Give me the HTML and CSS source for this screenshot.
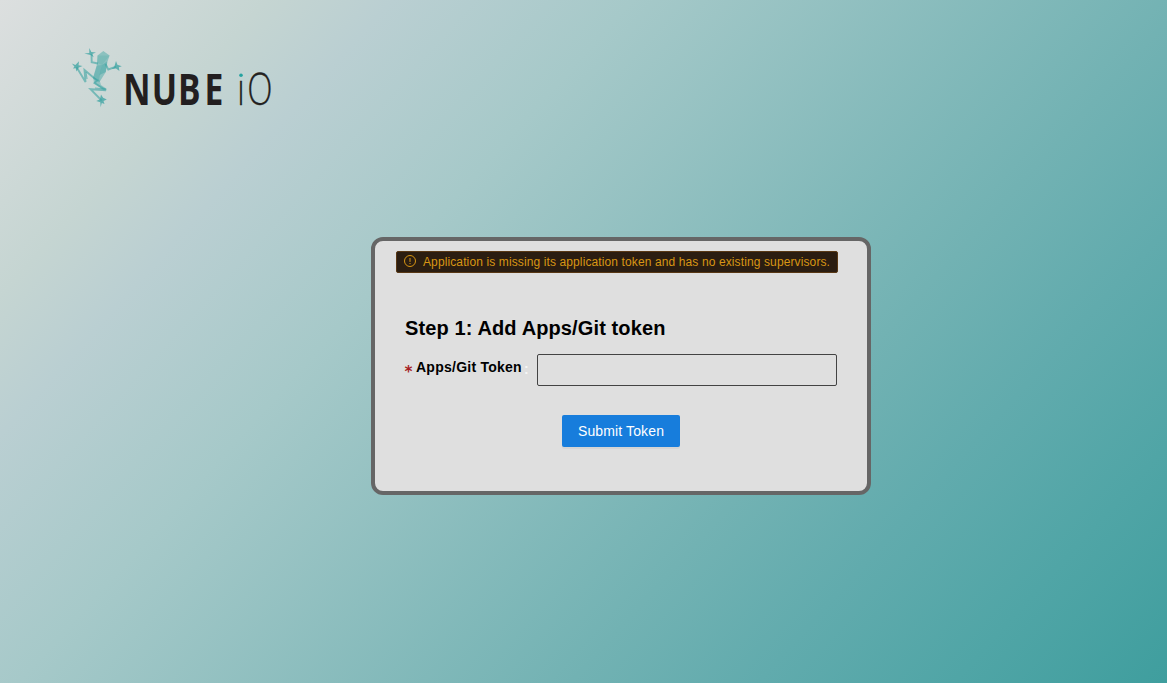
FILE: index.html
```html
<!DOCTYPE html>
<html lang="en">
<head>
<meta charset="utf-8">
<title>Nube iO</title>
<link rel="stylesheet" href="styles.css">
</head>
<body>
<header class="brand">
<svg class="logo" width="204" height="66" viewBox="0 0 204 66" role="img" aria-label="Nube iO">
  <g fill="#3aa3a2">
    <path opacity=".45" d="M29.5 10.5 35.3 6 41.6 10.5 39.5 16.5 37.8 27 31.5 37 25 33 28.7 20.7Z"/>
    <path opacity=".4" d="M34 20 39 16.5 37.8 27 31.5 30Z"/>
    <path opacity=".3" d="M28.7 20.7 34 20 30.5 37.5 25 33Z"/>
    <path opacity=".2" d="M29.5 10.5 41.6 10.5 34 20 29.5 18Z"/>
    <path opacity=".4" d="M25 32 31.5 35 33 40 39 44 36 45.5 26 38Z"/>
  </g>
  <g fill="none" stroke="#3aa3a2" stroke-opacity=".6" stroke-width="1.9">
    <path d="M23.5 9 23.7 17.3 30 18.5M37.5 19 40.3 24.5 48 21.7"/>
    <path d="M8.5 22 17.5 37 16.5 25 29 35.5 26.5 38 38 45.3 22.5 44.2 33.7 55.5"/>
    <path stroke-width="1.2" d="M18 27 19 34 M27 43 38 44"/>
  </g>
  <g fill="#3aa3a2" fill-opacity=".75">
    <path d="m21.3 3 2 4 4.7.4-3.8 1.5 1.5 3.3-3.2-2.3-6.2-1.4 5-.4Z"/>
    <path d="m11 16.2-.5 4 4 .8-3.7 1.5-2.3 4-.8-3.3-2.7.3 1.4-2-2.6-3 3.6 1.4Z"/>
    <path d="m48 16 1.4 3.8 4.4 1.4-3 1.1.6 3.8-3.4-2.5-4.3.3 2.6-2.2Z"/>
    <path d="m33 49.5 2.1 3.3 3.7 1.7-3.3 1.5 1 3-2.7-1-1.2 4.2-.3-5-4-1.3 3.7-1.7Z"/>
  </g>
  <g class="wordmark">
    <text class="nube" transform="translate(0 59.5) scale(.78 1)" x="71 107.3 141 175">NUBE</text>
    <text class="io" transform="translate(169.2 59.5) scale(.76 1)" x="0 13.2">ıO</text>
  </g>
  <circle cx="173" cy="30.2" r="1.8" fill="#25a3a0"/>
</svg>
</header>
<main class="card">
  <div class="alert">
    <svg class="alert-icon" width="12" height="12" viewBox="0 0 12 12" fill="none" stroke="currentColor"><circle cx="6" cy="6" r="5.5"/><path d="M6 3v3.9M6 8v1.1"/></svg>
    <span>Application is missing its application token and has no existing supervisors.</span>
  </div>
  <h1 class="title">Step 1: Add Apps/Git token</h1>
  <form class="form">
    <div class="row">
      <label class="label" for="token"><span class="required">*</span><b class="name">Apps/Git Token</b><span class="colon">:</span></label>
      <input class="input" id="token" type="text">
    </div>
    <button class="submit" type="button">Submit Token</button>
  </form>
</main>
</body>
</html>
```
FILE: styles.css
```css
* { box-sizing: border-box; }
body {
  margin: 0;
  min-height: 683px;
  font: 14px/22px "Liberation Sans", Arial, sans-serif;
  background: linear-gradient(132deg, #dcdfdf 0%, #c5d5d2 15%, #bacfd2 22%, #a6c9c9 35.5%, #72b2b3 66.5%, #61abad 77%, #50a5a6 88%, #3f9e9e 100%);
}
.brand { height: 237px; padding: 45px 0 0 68px; }
.logo { display: block; overflow: visible; }
.wordmark { font-family: "Open Sans", sans-serif; font-size: 43.5px; fill: #231f20; }
.nube { font-size: 43px; font-weight: 700; }
.io { font-weight: 300; stroke: #231f20; stroke-width: .3px; }
.card {
  width: 500px;
  height: 258px;
  margin-left: 371px;
  padding: 10px 30px 0;
  border: 4px solid #666;
  border-radius: 12px;
  background: #dfdfdf;
}
.alert {
  display: flex;
  align-items: center;
  gap: 7px;
  width: 442px;
  height: 22px;
  margin-left: -9px;
  padding: 0 7px;
  border: 1px solid #593815;
  border-radius: 2px;
  background: #2b1d11;
  color: #d89614;
  font-size: 12px;
  line-height: 20px;
  letter-spacing: .115px;
  white-space: nowrap;
}
.alert-icon { flex: none; margin-top: -2px; }
.title { margin: 39px 0 0; font-size: 20px; line-height: 32px; letter-spacing: .12px; color: #000; }
.row { display: flex; margin-top: 10px; }
.label { display: flex; width: 132px; height: 32px; line-height: 26px; color: #000; }
.name { letter-spacing: .25px; }
.required { width: 12px; margin-left: -1px; color: #a61d24; font-family: "DejaVu Sans Mono", monospace; font-size: 15px; font-weight: 700; line-height: 36px; }
.colon { margin-left: 2px; line-height: 31px; font-weight: 700; color: #f6f6f6; }
.input { width: 300px; height: 32px; padding: 4px 11px; border: 1px solid #434343; border-radius: 2px; background: transparent; }
.submit {
  display: block;
  width: 118px;
  height: 32px;
  margin: 29px 0 0 157px;
  padding: 0;
  border: 0;
  border-radius: 2px;
  background: #177ddc;
  color: #fff;
  font: 14px/32px "Liberation Sans", Arial, sans-serif;
  letter-spacing: .13px;
  box-shadow: 0 2px 0 rgba(0, 0, 0, .045);
}
```
